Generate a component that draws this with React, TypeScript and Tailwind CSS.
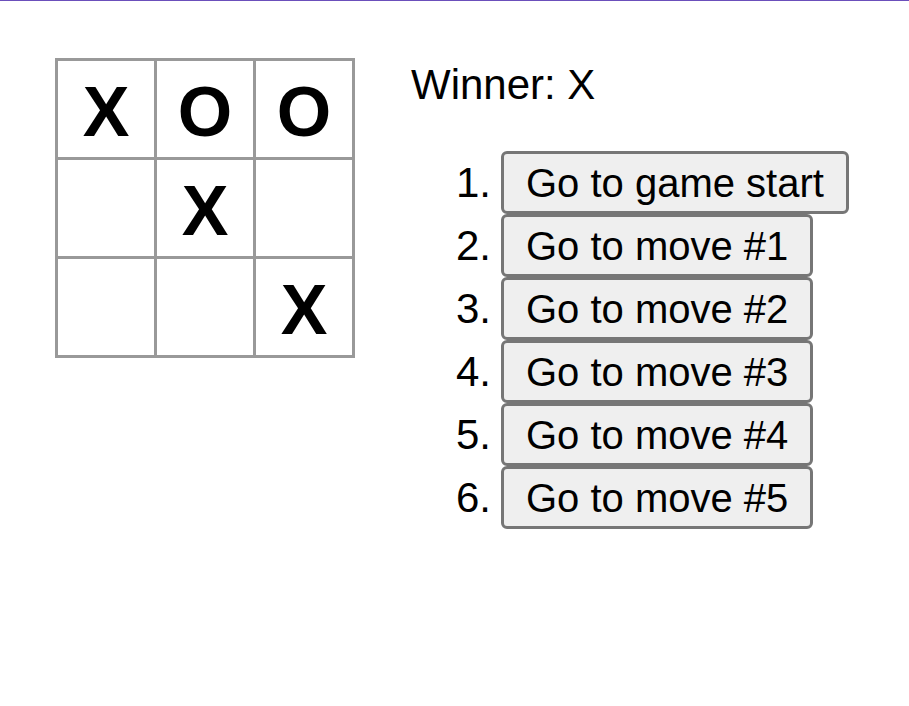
import { useState } from 'react';

type Cell = 'X' | 'O' | null;

const finalBoard: Cell[] = ['X', 'O', 'O', null, 'X', null, null, null, 'X'];

function Square({ value }: { value: Cell }) {
  return (
    <button
      className="-mr-[3px] -mt-[3px] h-[102px] w-[102px] border-[3px] border-[#999] bg-white pt-[6px] text-center text-[70px] font-bold leading-[90px] text-black"
      style={{ fontFamily: '"Liberation Sans", Arial, sans-serif' }}
    >
      {value}
    </button>
  );
}

export default function App() {
  const [board] = useState<Cell[]>(finalBoard);

  const moves = ['Go to game start', 'Go to move #1', 'Go to move #2', 'Go to move #3', 'Go to move #4', 'Go to move #5'];

  return (
    <div
      className="min-h-screen border-t border-[#6b4fbb] bg-white text-black"
      style={{ fontFamily: '"Liberation Sans", Arial, sans-serif' }}
    >
      <div className="flex items-start pl-[55px] pt-[60px]">
        {/* Board */}
        <div className="flex flex-col">
          {[0, 1, 2].map((row) => (
            <div key={row} className="flex">
              {[0, 1, 2].map((col) => (
                <Square key={col} value={board[row * 3 + col]} />
              ))}
            </div>
          ))}
        </div>

        {/* Game info */}
        <div className="ml-[59px] mt-[1px]">
          <div className="text-[42px] leading-[46px]">Winner: X</div>
          <ol className="mt-[43px] flex flex-col">
            {moves.map((label, i) => (
              <li key={label} className="flex items-baseline">
                <span className="w-[80px] text-right text-[42px] leading-[40px]">{i + 1}.</span>
                <button className="ml-[10px] h-[63px] rounded-[6px] border-[3px] border-[#767676] bg-[#efefef] px-[22px] text-[40px] leading-[46px] text-black">
                  {label}
                </button>
              </li>
            ))}
          </ol>
        </div>
      </div>
    </div>
  );
}
